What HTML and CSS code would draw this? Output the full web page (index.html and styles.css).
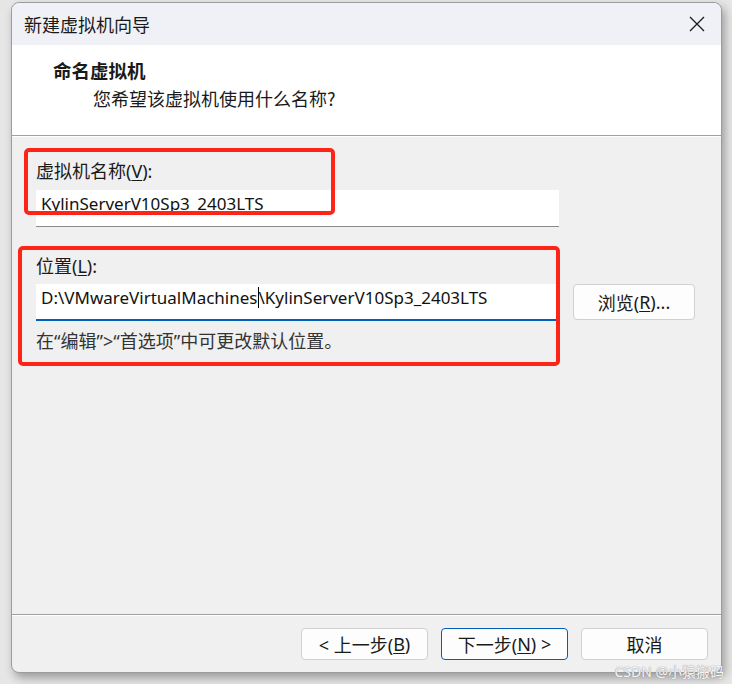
FILE: index.html
```html
<!DOCTYPE html>
<html lang="zh-CN">
<head>
<meta charset="utf-8">
<title>新建虚拟机向导</title>
<link rel="stylesheet" href="styles.css">
</head>
<body>
<div class="window">
  <div class="titlebar">
    <span class="title">新建虚拟机向导</span>
    <svg class="close" width="16" height="16" viewBox="0 0 16 16" aria-hidden="true">
      <path d="M1 1 L15 15 M15 1 L1 15" stroke="#1a1a1a" stroke-width="1.3" fill="none"/>
    </svg>
  </div>
  <div class="header">
    <div class="heading">命名虚拟机</div>
    <div class="subheading">您希望该虚拟机使用什么名称?</div>
  </div>
  <div class="content">
    <div class="field">
      <label class="label">虚拟机名称(<u>V</u>):</label>
      <div class="input name-input">KylinServerV10Sp3_2403LTS</div>
    </div>
    <div class="field">
      <label class="label">位置(<u>L</u>):</label>
      <div class="row">
        <div class="input path-input focused">D:\VMwareVirtualMachines<span class="caret"></span>\KylinServerV10Sp3_2403LTS</div>
        <button class="btn browse">浏览(<u>R</u>)...</button>
      </div>
      <div class="hint">在“编辑”&gt;“首选项”中可更改默认位置。</div>
    </div>
    <div class="mark mark-name"></div>
    <div class="mark mark-path"></div>
  </div>
  <div class="footer">
    <button class="btn">&lt; 上一步(<u>B</u>)</button>
    <button class="btn primary">下一步(<u>N</u>) &gt;</button>
    <button class="btn">取消</button>
  </div>
  <div class="watermark">CSDN @小猿搬码</div>
</div>
</body>
</html>
```
FILE: styles.css
```css
* { box-sizing: border-box; }
html, body { margin: 0; padding: 0; }
body {
  width: 732px;
  height: 684px;
  background: #e6e6e6;
  font-family: "Noto Sans", "Noto Sans CJK SC", sans-serif;
  color: #1a1a1a;
  overflow: hidden;
}
.window {
  position: relative;
  margin: 2px 0 0 11px;
  width: 711px;
  height: 671px;
  border: 1px solid #9c9c9c;
  border-radius: 8px;
  background: #f0f0f0;
  box-shadow: 3px 5px 10px rgba(0,0,0,0.32);
  display: flex;
  flex-direction: column;
}
.titlebar {
  height: 42px;
  flex: none;
  background: #f0f1f6;
  border-radius: 8px 8px 0 0;
  display: flex;
  align-items: center;
  justify-content: space-between;
  padding: 0 16px 0 12px;
}
.title {
  font-family: "Noto Sans CJK SC", sans-serif;
  font-size: 18px;
  color: #1a1a1a;
}
.close { display: block; }
.header {
  height: 91px;
  flex: none;
  background: #fff;
  border-bottom: 1px solid #a0a0a0;
  box-shadow: 0 1px 0 #ffffff;
  padding: 13px 0 0 41px;
}
.heading {
  font-family: "Noto Sans CJK SC", sans-serif;
  font-weight: 700;
  font-size: 18.5px;
  line-height: 24px;
}
.subheading {
  font-family: "Noto Sans CJK SC", sans-serif;
  font-size: 18px;
  line-height: 24px;
  margin: 4px 0 0 40px;
}
.content {
  position: relative;
  flex: 1;
  padding: 23px 0 0 24px;
  border-bottom: 1px solid #a0a0a0;
}
.field { display: flex; flex-direction: column; }
.field + .field { margin-top: 27px; }
.label {
  font-size: 18px;
  line-height: 24px;
  color: #1a1a1a;
}
u { text-decoration-thickness: 1px; text-underline-offset: 2px; }
.input {
  margin-top: 7px;
  height: 37px;
  background: #fff;
  border-bottom: 1px solid #8a8a8a;
  font-size: 17px;
  line-height: 28px;
  padding-left: 5px;
  color: #111;
  white-space: nowrap;
}
.name-input { width: 523px; }
.row { display: flex; align-items: flex-start; gap: 17px; margin-top: 6px; }
.path-input { margin-top: 0; width: 520px; }
.focused { border-bottom: 2px solid #005fb8; }
.caret {
  display: inline-block;
  width: 1px;
  height: 21px;
  background: #000;
  vertical-align: -4px;
}
.hint {
  margin-top: 8px;
  font-size: 18px;
  line-height: 24px;
  color: #333;
}
.btn {
  width: 127px;
  height: 32px;
  background: #fdfdfd;
  border: 1px solid #d0d0d0;
  border-radius: 4px;
  font-family: "Noto Sans", "Noto Sans CJK SC", sans-serif;
  font-size: 18px;
  color: #1a1a1a;
  padding: 0;
  display: flex;
  align-items: center;
  justify-content: center;
}
.browse { width: 122px; height: 36px; }
.primary { border-color: #005fb8; }
.footer {
  height: 57px;
  flex: none;
  border-top: 1px solid #ffffff;
  display: flex;
  justify-content: flex-end;
  align-items: flex-start;
  gap: 13px;
  padding: 12px 13px 0 0;
}
.mark {
  position: absolute;
  border: 4px solid #ff2418;
  border-radius: 5px;
}
.mark-name { left: 12px; top: 12px; width: 311px; height: 67px; }
.mark-path { left: 6px; top: 110px; width: 542px; height: 120px; }
.watermark {
  position: absolute;
  right: -3px;
  bottom: -9px;
  font-family: "Noto Sans", "Noto Sans CJK SC", sans-serif;
  font-size: 14px;
  color: rgba(255,255,255,0.92);
  text-shadow: 0 0 1px #999, 0 0 1px #999;
}
```
